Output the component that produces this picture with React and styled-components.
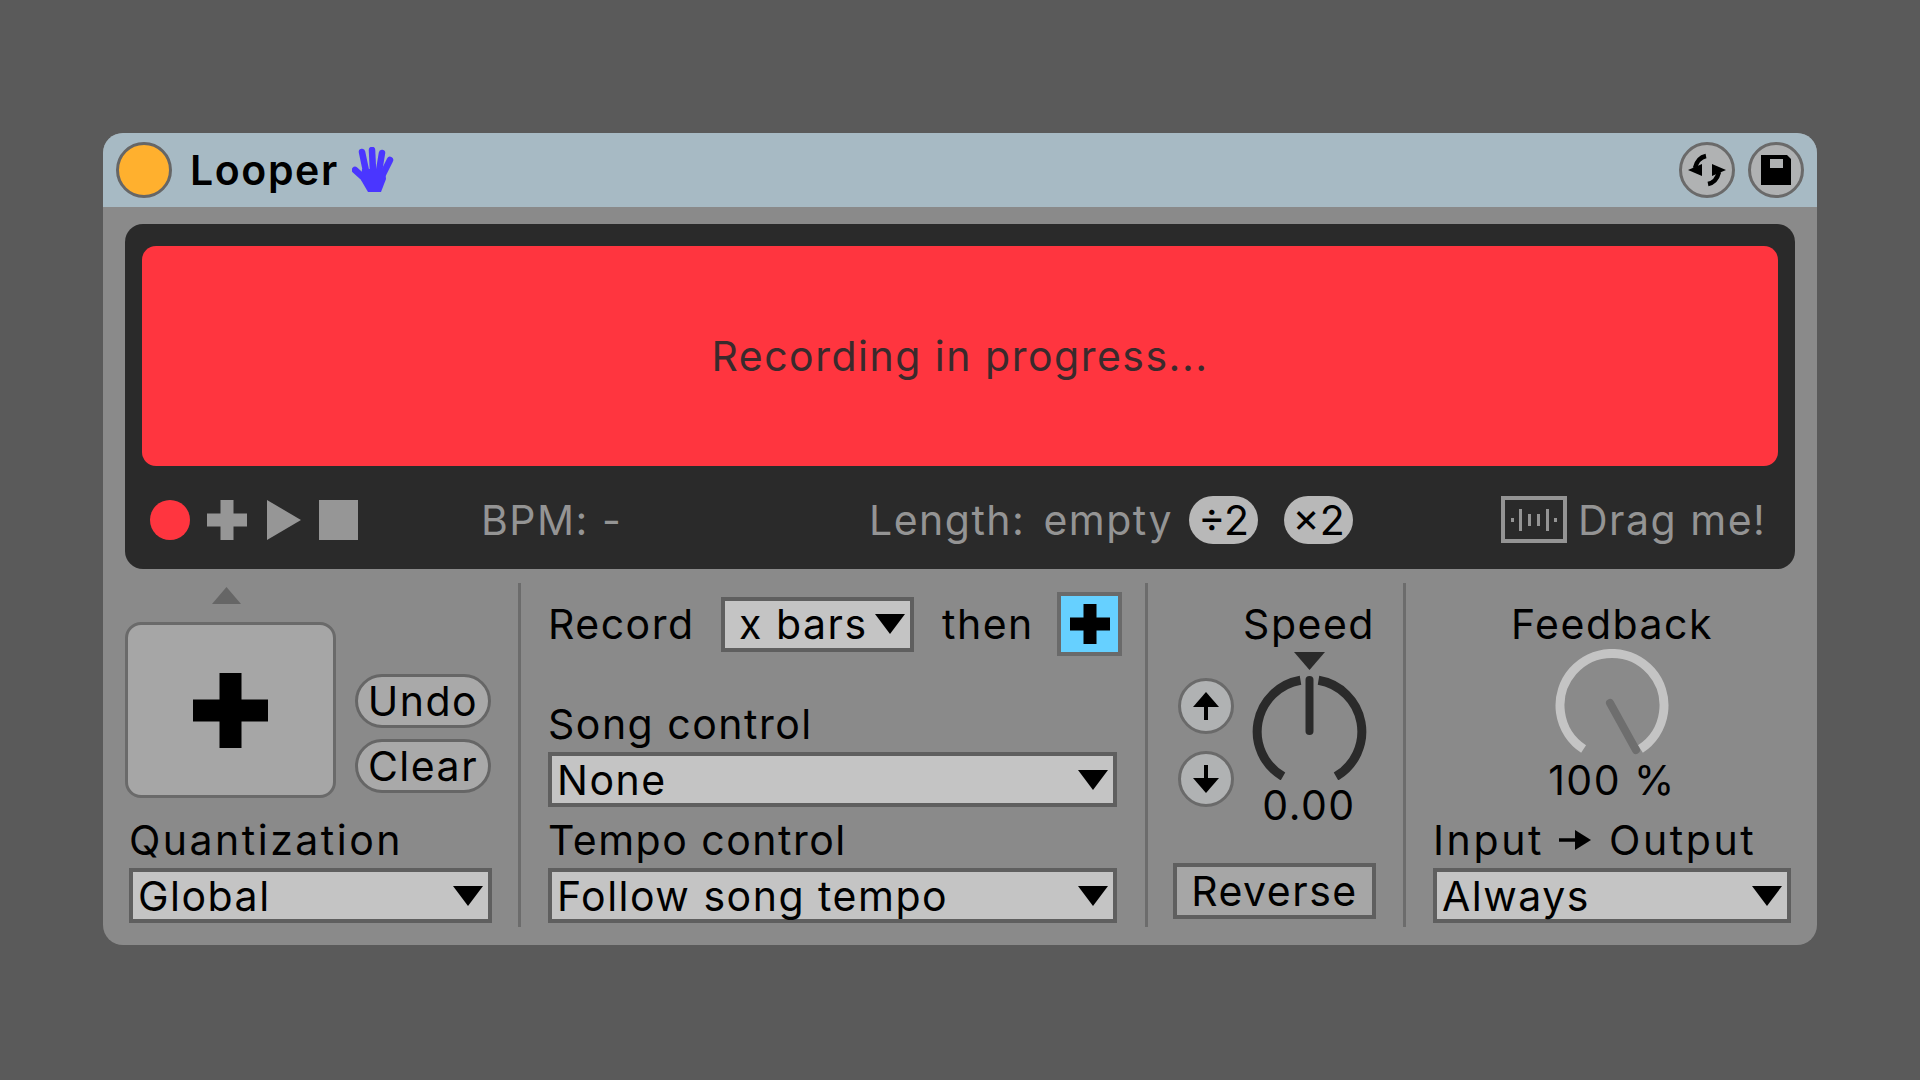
import styled, { createGlobalStyle } from "styled-components";

const GlobalStyle = createGlobalStyle`
  html, body { margin: 0; padding: 0; background: #5a5a5a; }
  body { font-family: "Inter", "Lato", sans-serif; }
`;

const Page = styled.div`
  width: 100%;
  min-height: 100vh;
  display: flex;
  align-items: center;
  justify-content: center;
  background: #5a5a5a;
`;

const Device = styled.div`
  width: 1714px;
  height: 812px;
  margin-bottom: 2px;
  background: #8a8a8a;
  border-radius: 20px;
  overflow: hidden;
  color: #000;
  font-size: 41px;
  line-height: 44px;
  letter-spacing: 1.5px;
`;

const TitleBar = styled.header`
  height: 74px;
  box-sizing: border-box;
  padding: 0 13px;
  display: flex;
  align-items: center;
  background: #a7bac4;
`;

const PowerDot = styled.div`
  width: 56px;
  height: 56px;
  box-sizing: border-box;
  border-radius: 50%;
  border: 3px solid #666;
  background: #ffb02e;
`;

const Title = styled.h1`
  margin: 0 13px 0 18px;
  font-size: 41px;
  font-weight: 600;
  line-height: 44px;
  letter-spacing: 1.6px;
`;

const TitleActions = styled.div`
  margin-left: auto;
  display: flex;
  gap: 13px;
`;

const RoundButton = styled.button`
  width: 56px;
  height: 56px;
  padding: 0;
  box-sizing: border-box;
  border-radius: 50%;
  border: 3px solid #6a6a6a;
  background: #b0b2b3;
  display: flex;
  align-items: center;
  justify-content: center;
  svg { display: block; }
`;

const Screen = styled.section`
  margin: 17px 22px 0;
  height: 345px;
  box-sizing: border-box;
  padding: 22px 17px 0;
  background: #2a2a2a;
  border-radius: 18px;
`;

const Banner = styled.div`
  height: 220px;
  display: flex;
  align-items: center;
  justify-content: center;
  border-radius: 14px;
  background: #ff353f;
  color: #3a2a2c;
`;

const Transport = styled.div`
  height: 103px;
  box-sizing: border-box;
  padding: 4px 0 0 8px;
  display: grid;
  grid-template-columns: 331px 388px 632px 1fr;
  align-items: center;
  color: #949494;
`;

const TransportIcons = styled.div`
  display: flex;
  align-items: center;
  gap: 17px;
  svg { display: block; }
`;

const LengthGroup = styled.div`
  display: flex;
  align-items: center;
`;

const LengthValue = styled.span`
  margin: 0 16px 0 18px;
`;

const RatePill = styled.span`
  width: 69px;
  height: 48px;
  margin-right: 26px;
  display: flex;
  align-items: center;
  justify-content: center;
  border-radius: 24px;
  background: #b8b8b8;
  color: #000;
  letter-spacing: 0;
`;

const DragGroup = styled.div`
  display: flex;
  align-items: center;
  gap: 11px;
  svg { display: block; }
`;

const Controls = styled.div`
  height: 344px;
  margin: 14px 22px 0;
  display: grid;
  grid-template-columns: 393px 3px 624px 3px 255px 3px 1fr;
`;

const Divider = styled.div`
  background: #6c6c6c;
`;

const Column = styled.div`
  display: flex;
  flex-direction: column;
  padding-top: ${(p) => p.$top || 0}px;
  padding-left: ${(p) => p.$left || 0}px;
`;

const Marker = styled.svg`
  display: block;
  margin: 0 0 18px 87px;
`;

const PadRow = styled.div`
  display: flex;
  align-items: flex-end;
  margin-bottom: 20px;
`;

const BigPad = styled.button`
  width: 211px;
  height: 176px;
  padding: 0;
  box-sizing: border-box;
  border-radius: 16px;
  border: 3px solid #6a6a6a;
  background: #a6a6a6;
  display: flex;
  align-items: center;
  justify-content: center;
`;

const PillStack = styled.div`
  margin: 0 0 5px 19px;
  display: flex;
  flex-direction: column;
  gap: 11px;
`;

const Pill = styled.button`
  width: 136px;
  height: 54px;
  padding: 0;
  box-sizing: border-box;
  border-radius: 27px;
  border: 3px solid #666;
  background: #a9a9a9;
  color: #000;
  font: inherit;
  letter-spacing: inherit;
`;

const Field = styled.div`
  margin-left: ${(p) => p.$indent || 0}px;
  margin-top: ${(p) => p.$gap || 0}px;
  width: ${(p) => p.$width}px;
`;

const FieldLabel = styled.div`
  margin: 0 0 6px;
  display: flex;
  align-items: center;
  letter-spacing: ${(p) => p.$spread || 1.5}px;
`;

const Dropdown = styled.div`
  width: 100%;
  height: 55px;
  box-sizing: border-box;
  padding: 0 5px 0 ${(p) => p.$pad || 5}px;
  display: flex;
  align-items: center;
  justify-content: space-between;
  border: 4px solid #5f5f5f;
  background: #c4c4c4;
`;

const Caret = styled.span`
  width: 0;
  height: 0;
  border-left: 15px solid transparent;
  border-right: 15px solid transparent;
  border-top: 20px solid #000;
`;

const RecordRow = styled.div`
  height: 64px;
  display: grid;
  grid-template-columns: 173px 193px 143px 65px;
  align-items: center;
  margin-bottom: 46px;
`;

const RecordLabel = styled.span`
  padding-left: ${(p) => p.$pad || 0}px;
`;

const ToggleBlue = styled.button`
  width: 65px;
  height: 64px;
  padding: 0;
  box-sizing: border-box;
  border: 4px solid #6a6a6a;
  background: #66d0ff;
  display: flex;
  align-items: center;
  justify-content: center;
`;

const SpeedRow = styled.div`
  display: flex;
  gap: 10px;
  margin-bottom: 36px;
  padding-left: 30px;
`;

const Steppers = styled.div`
  margin-top: 76px;
  display: flex;
  flex-direction: column;
  gap: 17px;
`;

const KnobBlock = styled.div`
  width: 130px;
  display: flex;
  flex-direction: column;
  align-items: center;
  svg { display: block; }
`;

const KnobLabel = styled.div`
  white-space: nowrap;
  margin-top: ${(p) => p.$above || 0}px;
  margin-bottom: ${(p) => p.$below || 0}px;
`;

const ReverseButton = styled.button`
  width: 203px;
  height: 56px;
  margin-left: 25px;
  padding: 0;
  box-sizing: border-box;
  border: 4px solid #5f5f5f;
  background: #a6a6a6;
  color: #000;
  font: inherit;
  letter-spacing: inherit;
`;

const FeedbackBlock = styled.div`
  width: 358px;
  display: flex;
  flex-direction: column;
  align-items: center;
  margin-bottom: 16px;
  svg { display: block; }
`;

const OutputArrow = styled.svg`
  margin: 0 18px 0 15px;
`;

const HandMark = styled.svg`
  display: block;
`;

function Plus({ size, arm, color = "#000" }) {
  const start = (size - arm) / 2;
  return (
    <svg width={size} height={size} viewBox={`0 0 ${size} ${size}`}>
      <rect x={start} width={arm} height={size} fill={color} />
      <rect y={start} width={size} height={arm} fill={color} />
    </svg>
  );
}

function HandIcon() {
  return (
    <HandMark width="42" height="46" viewBox="0 0 42 46">
      <g stroke="#4a36ff" strokeWidth="6.5" strokeLinecap="round" fill="none">
        <path d="M10 5 L14 24" />
        <path d="M20 3 L21 24" />
        <path d="M30 6 L27 24" />
        <path d="M38 13 L31 27" />
        <path d="M3 23 L13 32" />
      </g>
      <path d="M10 22 L33 22 L34 32 L29 45 L16 45 L9 33 Z" fill="#4a36ff" />
    </HandMark>
  );
}

function SyncIcon() {
  const half = (
    <>
      <path d="M24 11 C19 12 15 15 13 23" fill="none" stroke="#000" strokeWidth="4.5" />
      <path d="M6 25 L20 19 L20 31 Z" fill="#000" />
    </>
  );
  return (
    <svg width="50" height="50" viewBox="0 0 50 50">
      {half}
      <g transform="rotate(180 25 25)">{half}</g>
    </svg>
  );
}

function SaveIcon() {
  return (
    <svg width="50" height="50" viewBox="0 0 50 50">
      <path d="M10 10 H36 L40 14 V40 H10 Z" fill="#000" />
      <rect x="19" y="14" width="13" height="9" fill="#b0b2b3" />
    </svg>
  );
}

function DragIcon() {
  const bars = [
    [10, 2],
    [18, 11],
    [27, 6],
    [36, 6],
    [45, 11],
    [53, 2],
  ];
  return (
    <svg width="66" height="47" viewBox="0 0 66 47">
      <rect x="2" y="2" width="62" height="43" fill="none" stroke="#949494" strokeWidth="4" />
      {bars.map(([x, h]) => (
        <rect key={x} x={x} y={24 - h} width="3" height={h * 2} fill="#949494" />
      ))}
    </svg>
  );
}

function ArrowIcon({ down }) {
  return (
    <svg width="50" height="50" viewBox="0 0 50 50">
      <g transform={down ? "rotate(180 25 25)" : undefined}>
        <path d="M25 11 L38 26 H12 Z" fill="#000" />
        <rect x="23" y="24" width="4" height="15" fill="#000" />
      </g>
    </svg>
  );
}

function SpeedKnob() {
  return (
    <svg width="130" height="128" viewBox="0 0 130 128">
      <path d="M50 0 H81 L65.5 18 Z" fill="#2a2a2a" />
      <g fill="none" stroke="#2a2a2a" strokeWidth="9">
        <path d="M39 124.5 A52 52 0 0 1 56.5 28.3" />
        <path d="M74.5 28.3 A52 52 0 0 1 92 124.5" />
      </g>
      <path d="M65.5 28 V79" stroke="#2a2a2a" strokeWidth="8" strokeLinecap="round" />
    </svg>
  );
}

function FeedbackKnob() {
  return (
    <svg width="114" height="107" viewBox="0 0 114 107">
      <path d="M28.6 100 A52 52 0 1 1 85.4 100" fill="none" stroke="#c4c4c4" strokeWidth="9" />
      <path d="M55 54 L81 101" stroke="#6e6e6e" strokeWidth="8" strokeLinecap="round" />
    </svg>
  );
}

function Select({ value, pad }) {
  return (
    <Dropdown $pad={pad}>
      <span>{value}</span>
      <Caret />
    </Dropdown>
  );
}

export default function App() {
  return (
    <Page>
      <GlobalStyle />
      <Device>
        <TitleBar>
          <PowerDot />
          <Title>Looper</Title>
          <HandIcon />
          <TitleActions>
            <RoundButton><SyncIcon /></RoundButton>
            <RoundButton><SaveIcon /></RoundButton>
          </TitleActions>
        </TitleBar>

        <Screen>
          <Banner>Recording in progress...</Banner>
          <Transport>
            <TransportIcons>
              <svg width="40" height="40" viewBox="0 0 40 40">
                <circle cx="20" cy="20" r="20" fill="#ff353f" />
              </svg>
              <Plus size={40} arm={13} color="#969696" />
              <svg width="38" height="40" viewBox="0 0 38 40">
                <path d="M3 0 L37 20 L3 40 Z" fill="#969696" />
              </svg>
              <svg width="39" height="40" viewBox="0 0 39 40">
                <rect width="39" height="40" fill="#969696" />
              </svg>
            </TransportIcons>
            <span>BPM: -</span>
            <LengthGroup>
              <span>Length:</span>
              <LengthValue>empty</LengthValue>
              <RatePill>÷2</RatePill>
              <RatePill>×2</RatePill>
            </LengthGroup>
            <DragGroup>
              <DragIcon />
              <span>Drag me!</span>
            </DragGroup>
          </Transport>
        </Screen>

        <Controls>
          <Column $top={4}>
            <Marker width="29" height="17" viewBox="0 0 29 17">
              <path d="M14.5 0 L29 17 H0 Z" fill="#666" />
            </Marker>
            <PadRow>
              <BigPad><Plus size={75} arm={22} /></BigPad>
              <PillStack>
                <Pill>Undo</Pill>
                <Pill>Clear</Pill>
              </PillStack>
            </PadRow>
            <Field $indent={4} $width={363}>
              <FieldLabel $spread={2.5}>Quantization</FieldLabel>
              <Select value="Global" />
            </Field>
          </Column>
          <Divider />

          <Column $top={9} $left={27}>
            <RecordRow>
              <RecordLabel>Record</RecordLabel>
              <Select value="x bars" pad={14} />
              <RecordLabel $pad={28}>then</RecordLabel>
              <ToggleBlue><Plus size={40} arm={13} /></ToggleBlue>
            </RecordRow>
            <Field $width={569}>
              <FieldLabel>Song control</FieldLabel>
              <Select value="None" />
            </Field>
            <Field $width={569} $gap={11}>
              <FieldLabel>Tempo control</FieldLabel>
              <Select value="Follow song tempo" />
            </Field>
          </Column>
          <Divider />

          <Column $top={19}>
            <SpeedRow>
              <Steppers>
                <RoundButton><ArrowIcon /></RoundButton>
                <RoundButton><ArrowIcon down /></RoundButton>
              </Steppers>
              <KnobBlock>
                <KnobLabel $below={6}>Speed</KnobLabel>
                <SpeedKnob />
                <KnobLabel $above={3}>0.00</KnobLabel>
              </KnobBlock>
            </SpeedRow>
            <ReverseButton>Reverse</ReverseButton>
          </Column>
          <Divider />

          <Column $top={19} $left={27}>
            <FeedbackBlock>
              <KnobLabel $below={3}>Feedback</KnobLabel>
              <FeedbackKnob />
              <KnobLabel $above={2}>100 %</KnobLabel>
            </FeedbackBlock>
            <Field $width={358}>
              <FieldLabel $spread={2.6}>
                Input
                <OutputArrow width="32" height="24" viewBox="0 0 32 24">
                  <path d="M0 12 H24" stroke="#000" strokeWidth="3.5" />
                  <path d="M16 2 L32 12 L16 22 Z" fill="#000" />
                </OutputArrow>
                Output
              </FieldLabel>
              <Select value="Always" />
            </Field>
          </Column>
        </Controls>
      </Device>
    </Page>
  );
}
